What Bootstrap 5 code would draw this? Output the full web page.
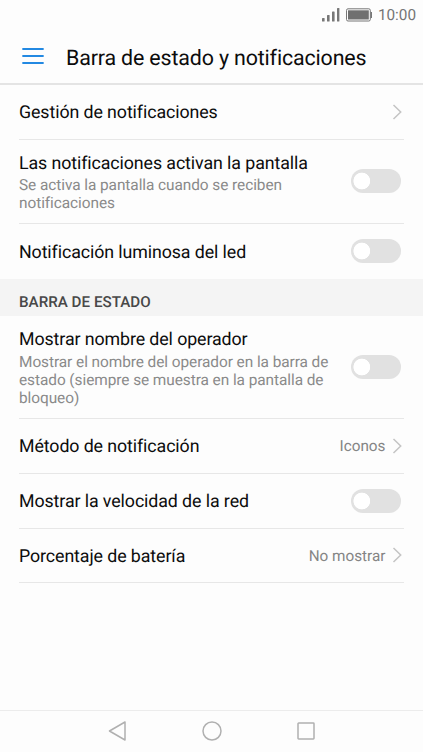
<!DOCTYPE html>
<html lang="es">
<head>
<meta charset="utf-8">
<meta name="viewport" content="width=device-width, initial-scale=1">
<title>Barra de estado y notificaciones</title>
<link href="https://cdn.jsdelivr.net/npm/bootstrap@5.3.0/dist/css/bootstrap.min.css" rel="stylesheet">
<style>
body{font-family:Roboto,"Liberation Sans",sans-serif;background:#fdfdfd;color:#0c0c0c;height:752px;overflow:hidden;text-rendering:geometricPrecision}
svg{display:block;flex:none}
.status-bar{height:30px;padding-right:7px;color:#757575;font-size:15.3px;line-height:30px}
.status-bar .battery{margin:0 6px 0 6px}
.app-header{height:55px;padding:0 0 1px 22px;border-bottom:2px solid #e4e4e4}
.app-title{font-size:21.4px;line-height:28px;font-weight:400;letter-spacing:-.15px;margin:5px 0 0 22px}
.settings{margin:0 19px;background:transparent}
.settings .setting{background:transparent;color:inherit;padding:0;border:0;border-bottom:1px solid #e7e7e7;height:54.8px}
.settings.list-group-flush>.setting:last-child{border-bottom:1px solid #e7e7e7}
.settings .setting-two{height:84.2px}
.settings.list-group-flush>.setting-last:last-child{height:55px;border-bottom:0}
.settings .setting-last .toggle{margin-bottom:1px}
.settings .setting-three{height:103px}
.label{font-size:17.8px;line-height:22px;letter-spacing:-.09px;white-space:nowrap;padding-top:2.4px}
.setting-two .label,.setting-three .label{padding-top:2px}
.setting-last .label{padding-top:3px}
.hint{font-size:15.4px;line-height:18px;color:#8a8a8a;letter-spacing:-.06px;margin-top:1px;white-space:nowrap}
.setting-three .hint{margin-top:2px}
.value{font-size:15.3px;line-height:22px;padding-top:1px;color:#858585;margin-right:6px}
.section-title{height:37px;padding:8px 19px 0;background:#f4f4f4;color:#484848;font-size:15.2px;line-height:30px;font-weight:500;margin:0}
.toggle.form-check-input{width:50px;height:24px;margin:0 3px 0 0;border:0;flex:none;background-color:#e1e1e1;background-image:radial-gradient(circle at 10.8px 12px,#fff 8px,transparent 8.7px);background-size:100% 100%;border-radius:12px}
.chevron{margin-right:.5px}
.nav-keys{height:42px;border-top:1.5px solid #ececec;gap:75px;padding:0 1px 1px 0}
</style>
</head>
<body class="d-flex flex-column">
<div class="status-bar d-flex justify-content-end align-items-center">
  <svg width="18" height="14" viewBox="0 0 18 14" fill="#777"><rect x="0" y="10" width="2.6" height="3.5" rx=".6"/><rect x="5" y="7" width="2.6" height="6.5" rx=".6"/><rect x="10" y="3.5" width="2.6" height="10" rx=".6"/><rect x="15" y="0" width="2.4" height="13.5" rx=".6"/></svg>
  <svg class="battery" width="26" height="14" viewBox="0 0 26 14"><rect x=".5" y=".8" width="23.8" height="12.2" rx="1.5" fill="none" stroke="#777"/><rect x="2" y="2.3" width="20.8" height="9.2" fill="#707070"/><path d="M24.5 4H26v6h-1.5z" fill="#777"/></svg>
  <span>10:00</span>
</div>
<header class="app-header d-flex align-items-center">
  <svg width="22" height="18" viewBox="0 0 22 18" fill="none" stroke="#2389e2" stroke-width="1.8" stroke-linecap="round"><path d="M1 2h20M1 9h20M1 16h20"/></svg>
  <h1 class="app-title">Barra de estado y notificaciones</h1>
</header>
<main class="flex-grow-1">
  <div class="list-group list-group-flush settings">
    <div class="list-group-item setting d-flex align-items-center justify-content-between"><span class="label">Gestión de notificaciones</span><svg class="chevron" width="12" height="16" viewBox="0 0 12 16" fill="none" stroke="#c4c4c4" stroke-width="1.5"><path d="M1.5 1l7.2 7-7.2 7"/></svg></div>
    <div class="list-group-item setting setting-two d-flex align-items-center justify-content-between"><div><div class="label">Las notificaciones activan la pantalla</div><div class="hint">Se activa la pantalla cuando se reciben<br>notificaciones</div></div><input class="form-check-input toggle" type="checkbox" role="switch" aria-label="Las notificaciones activan la pantalla"></div>
    <div class="list-group-item setting setting-last d-flex align-items-center justify-content-between"><span class="label">Notificación luminosa del led</span><input class="form-check-input toggle" type="checkbox" role="switch" aria-label="Notificación luminosa del led"></div>
  </div>
  <h2 class="section-title">BARRA DE ESTADO</h2>
  <div class="list-group list-group-flush settings">
    <div class="list-group-item setting setting-three d-flex align-items-center justify-content-between"><div><div class="label">Mostrar nombre del operador</div><div class="hint">Mostrar el nombre del operador en la barra de<br>estado (siempre se muestra en la pantalla de<br>bloqueo)</div></div><input class="form-check-input toggle" type="checkbox" role="switch" aria-label="Mostrar nombre del operador"></div>
    <div class="list-group-item setting d-flex align-items-center"><span class="label me-auto">Método de notificación</span><span class="value">Iconos</span><svg class="chevron" width="12" height="16" viewBox="0 0 12 16" fill="none" stroke="#c4c4c4" stroke-width="1.5"><path d="M1.5 1l7.2 7-7.2 7"/></svg></div>
    <div class="list-group-item setting d-flex align-items-center justify-content-between"><span class="label">Mostrar la velocidad de la red</span><input class="form-check-input toggle" type="checkbox" role="switch" aria-label="Mostrar la velocidad de la red"></div>
    <div class="list-group-item setting d-flex align-items-center"><span class="label me-auto">Porcentaje de batería</span><span class="value">No mostrar</span><svg class="chevron" width="12" height="16" viewBox="0 0 12 16" fill="none" stroke="#c4c4c4" stroke-width="1.5"><path d="M1.5 1l7.2 7-7.2 7"/></svg></div>
  </div>
</main>
<nav class="nav-keys d-flex justify-content-center align-items-center" aria-label="Navegación">
  <svg width="19" height="20" viewBox="0 0 19 20" fill="none" stroke="#b0b0b0" stroke-width="1.5" stroke-linejoin="round"><path d="M17 1v18L1.5 10z"/></svg>
  <svg width="20" height="20" viewBox="0 0 20 20" fill="none" stroke="#b0b0b0" stroke-width="1.5"><circle cx="10" cy="10" r="9"/></svg>
  <svg width="18" height="18" viewBox="0 0 18 18" fill="none" stroke="#b0b0b0" stroke-width="1.5"><rect x="1" y="1" width="16" height="16" rx=".7"/></svg>
</nav>
<script src="https://cdn.jsdelivr.net/npm/bootstrap@5.3.0/dist/js/bootstrap.bundle.min.js"></script>
</body>
</html>
